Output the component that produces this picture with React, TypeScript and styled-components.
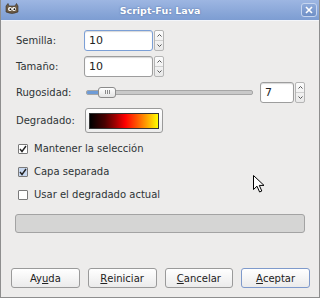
import styled, { createGlobalStyle } from "styled-components";

const Global = createGlobalStyle`
html,body{margin:0;padding:0;}
body{background:#edeceb;font-family:"DejaVu Sans",Verdana,sans-serif;font-size:10px;color:#2e3436;}
`;

const Window = styled.div`
position:relative;
width:320px;
height:298px;
box-sizing:border-box;
border:1px solid #8e8e8e;
border-top:none;
background:#edeceb;
display:flex;
flex-direction:column;
overflow:hidden;
`;

const TitleBar = styled.div`
height:20px;
margin:0 -1px;
background:linear-gradient(#9db6e2,#7d9dd2);
border-bottom:1px solid #f4f6fa;
display:flex;
align-items:center;
justify-content:center;
position:relative;
`;

const Title = styled.span`
color:#fff;
font-weight:bold;
font-size:9.5px;
text-shadow:0 0 2px #4d6a9e;
`;

const TitleIcon = styled.div`
position:absolute;
left:5px;
top:3px;
`;

const CloseBtn = styled.div`
position:absolute;
right:3px;
top:3px;
width:14px;
height:12px;
border:1px solid #c6d5ef;
border-radius:3px;
background:linear-gradient(#8eaada,#6f8fc6);
display:flex;
align-items:center;
justify-content:center;
`;

const Body = styled.div`
flex:1;
display:flex;
flex-direction:column;
padding:9px 14px 0 14px;
`;

const Row = styled.div<{ $h: number; $mt?: number }>`
display:flex;
align-items:center;
height:${p => p.$h}px;
margin-top:${p => p.$mt ?? 0}px;
`;

const Label = styled.div`
width:68px;
flex:none;
padding-left:1px;
`;

const Spin = styled.div`
display:flex;
gap:1px;
height:21px;
`;

const Entry = styled.div<{ $w: number; $focus?: boolean }>`
width:${p => p.$w}px;
box-sizing:border-box;
background:#fff;
border:1px solid ${p => (p.$focus ? "#7b9fd6" : "#9d9d9d")};
border-radius:3px;
box-shadow:inset 0 1px 1px #d8d8d8;
display:flex;
align-items:center;
padding-left:4px;
font-size:11px;
color:#222;
`;

const Arrows = styled.div`
width:10px;
box-sizing:border-box;
border:1px solid #b5b5b5;
border-radius:2px;
background:linear-gradient(#fbfbfb,#e9e9e9);
display:flex;
flex-direction:column;
`;

const ArrowHalf = styled.div<{ $top?: boolean }>`
flex:1;
display:flex;
align-items:center;
justify-content:center;
border-bottom:${p => (p.$top ? "1px solid #cfcfcf" : "none")};
`;

const Slider = styled.div`
flex:1;
position:relative;
height:12px;
margin-left:2px;
margin-right:7px;
display:flex;
align-items:center;
`;

const Track = styled.div`
flex:1;
height:3px;
background:#c9c9c9;
border:1px solid #a6a6a6;
border-radius:2px;
overflow:hidden;
display:flex;
`;

const Fill = styled.div`
width:13px;
background:#6e9bd6;
`;

const Thumb = styled.div`
position:absolute;
left:12px;
top:0;
width:18px;
height:11px;
box-sizing:border-box;
border:1px solid #8b8b8b;
border-radius:3px;
background:linear-gradient(#ffffff,#e3e3e3);
display:flex;
align-items:center;
justify-content:center;
gap:1px;
`;

const Grip = styled.div`
width:1px;
height:4px;
background:#888;
`;

const GradBtn = styled.div`
width:78px;
height:25px;
box-sizing:border-box;
border:1px solid #9a9a9a;
border-radius:3px;
background:linear-gradient(#ffffff,#ececec);
padding:4px 3px 3px 3px;
display:flex;
margin-left:1px;
`;

const Swatch = styled.div`
flex:1;
border:1px solid #333;
background:linear-gradient(to right,#000 0%,#4a0000 22%,#a30000 38%,#ff0000 52%,#ff5a00 70%,#ffb000 86%,#ffff00 100%);
`;

const Check = styled.div`
display:flex;
align-items:center;
height:23px;
padding-left:3px;
gap:6px;
`;

const Box = styled.div<{ $hover?: boolean }>`
width:10px;
height:10px;
box-sizing:border-box;
border:1px solid #7a7a7a;
border-radius:1px;
background:${p => (p.$hover ? "#c8d8f0" : "#fff")};
display:flex;
align-items:center;
justify-content:center;
`;

const Progress = styled.div`
height:19px;
margin-top:8px;
box-sizing:border-box;
border:1px solid #a3a3a3;
border-radius:3px;
background:#d5d5d4;
`;

const ButtonRow = styled.div`
display:grid;
grid-template-columns:repeat(4,1fr);
gap:8px;
padding:0 9px 9px 10px;
`;

const Button = styled.div<{ $default?: boolean }>`
height:20px;
box-sizing:border-box;
border:1px solid ${p => (p.$default ? "#7f9acb" : "#9a9a9a")};
border-radius:3px;
background:linear-gradient(#ffffff,#ebebeb);
display:flex;
align-items:center;
justify-content:center;
color:#222;
u{text-decoration:underline;text-underline-offset:1px;}
`;

const Cursor = styled.svg`
position:absolute;
left:252px;
top:175px;
`;

const Up = () => (
  <svg width="5" height="3" viewBox="0 0 5 3"><path d="M0.5 2.5 L2.5 0.5 L4.5 2.5" fill="none" stroke="#555" strokeWidth="1" /></svg>
);
const Down = () => (
  <svg width="5" height="3" viewBox="0 0 5 3"><path d="M0.5 0.5 L2.5 2.5 L4.5 0.5" fill="none" stroke="#555" strokeWidth="1" /></svg>
);

const Tick = () => (
  <svg width="8" height="8" viewBox="0 0 8 8"><path d="M1 4 L3 6.5 L7 1" fill="none" stroke="#222" strokeWidth="1.4" /></svg>
);

function SpinBox({ value, w, focus }: { value: string; w: number; focus?: boolean }) {
  return (
    <Spin>
      <Entry $w={w} $focus={focus}>{value}</Entry>
      <Arrows>
        <ArrowHalf $top><Up /></ArrowHalf>
        <ArrowHalf><Down /></ArrowHalf>
      </Arrows>
    </Spin>
  );
}

export default function App() {
  return (
    <>
      <Global />
      <Window>
        <TitleBar>
          <TitleIcon>
            <svg width="14" height="12" viewBox="0 0 14 12">
              <path d="M1 3 L3 0.5 L4 3 L10 3 L11.5 0.5 L13 3 L13 9 Q7 12 1 9 Z" fill="#6b5a45" stroke="#3a3026" strokeWidth="0.6" />
              <circle cx="5" cy="6" r="2" fill="#fff" />
              <circle cx="9" cy="6" r="2" fill="#fff" />
              <circle cx="5.4" cy="6.2" r="0.9" fill="#111" />
              <circle cx="9.4" cy="6.2" r="0.9" fill="#111" />
            </svg>
          </TitleIcon>
          <Title>Script-Fu: Lava</Title>
          <CloseBtn>
            <svg width="8" height="8" viewBox="0 0 8 8"><path d="M1 1 L7 7 M7 1 L1 7" stroke="#fff" strokeWidth="1.6" /></svg>
          </CloseBtn>
        </TitleBar>
        <Body>
          <Row $h={21}>
            <Label>Semilla:</Label>
            <SpinBox value="10" w={69} focus />
          </Row>
          <Row $h={21} $mt={5}>
            <Label>Tamaño:</Label>
            <SpinBox value="10" w={69} />
          </Row>
          <Row $h={21} $mt={5}>
            <Label>Rugosidad:</Label>
            <Slider>
              <Track><Fill /></Track>
              <Thumb><Grip /><Grip /><Grip /></Thumb>
            </Slider>
            <SpinBox value="7" w={34} />
          </Row>
          <Row $h={25} $mt={5}>
            <Label>Degradado:</Label>
            <GradBtn><Swatch /></GradBtn>
          </Row>
          <Check style={{ marginTop: 4 }}>
            <Box><Tick /></Box>
            <span>Mantener la selección</span>
          </Check>
          <Check>
            <Box $hover><Tick /></Box>
            <span>Capa separada</span>
          </Check>
          <Check>
            <Box />
            <span>Usar el degradado actual</span>
          </Check>
          <Progress />
        </Body>
        <ButtonRow>
          <Button>Ay<u>u</u>da</Button>
          <Button><u>R</u>einiciar</Button>
          <Button><u>C</u>ancelar</Button>
          <Button $default><u>A</u>ceptar</Button>
        </ButtonRow>
        <Cursor width="12" height="18" viewBox="0 0 12 18">
          <path d="M0.5 0.5 L0.5 14.5 L4 11.2 L6.6 17 L8.8 16 L6.3 10.4 L11 10.4 Z" fill="#fff" stroke="#000" strokeWidth="1" strokeLinejoin="round" />
        </Cursor>
      </Window>
    </>
  );
}
